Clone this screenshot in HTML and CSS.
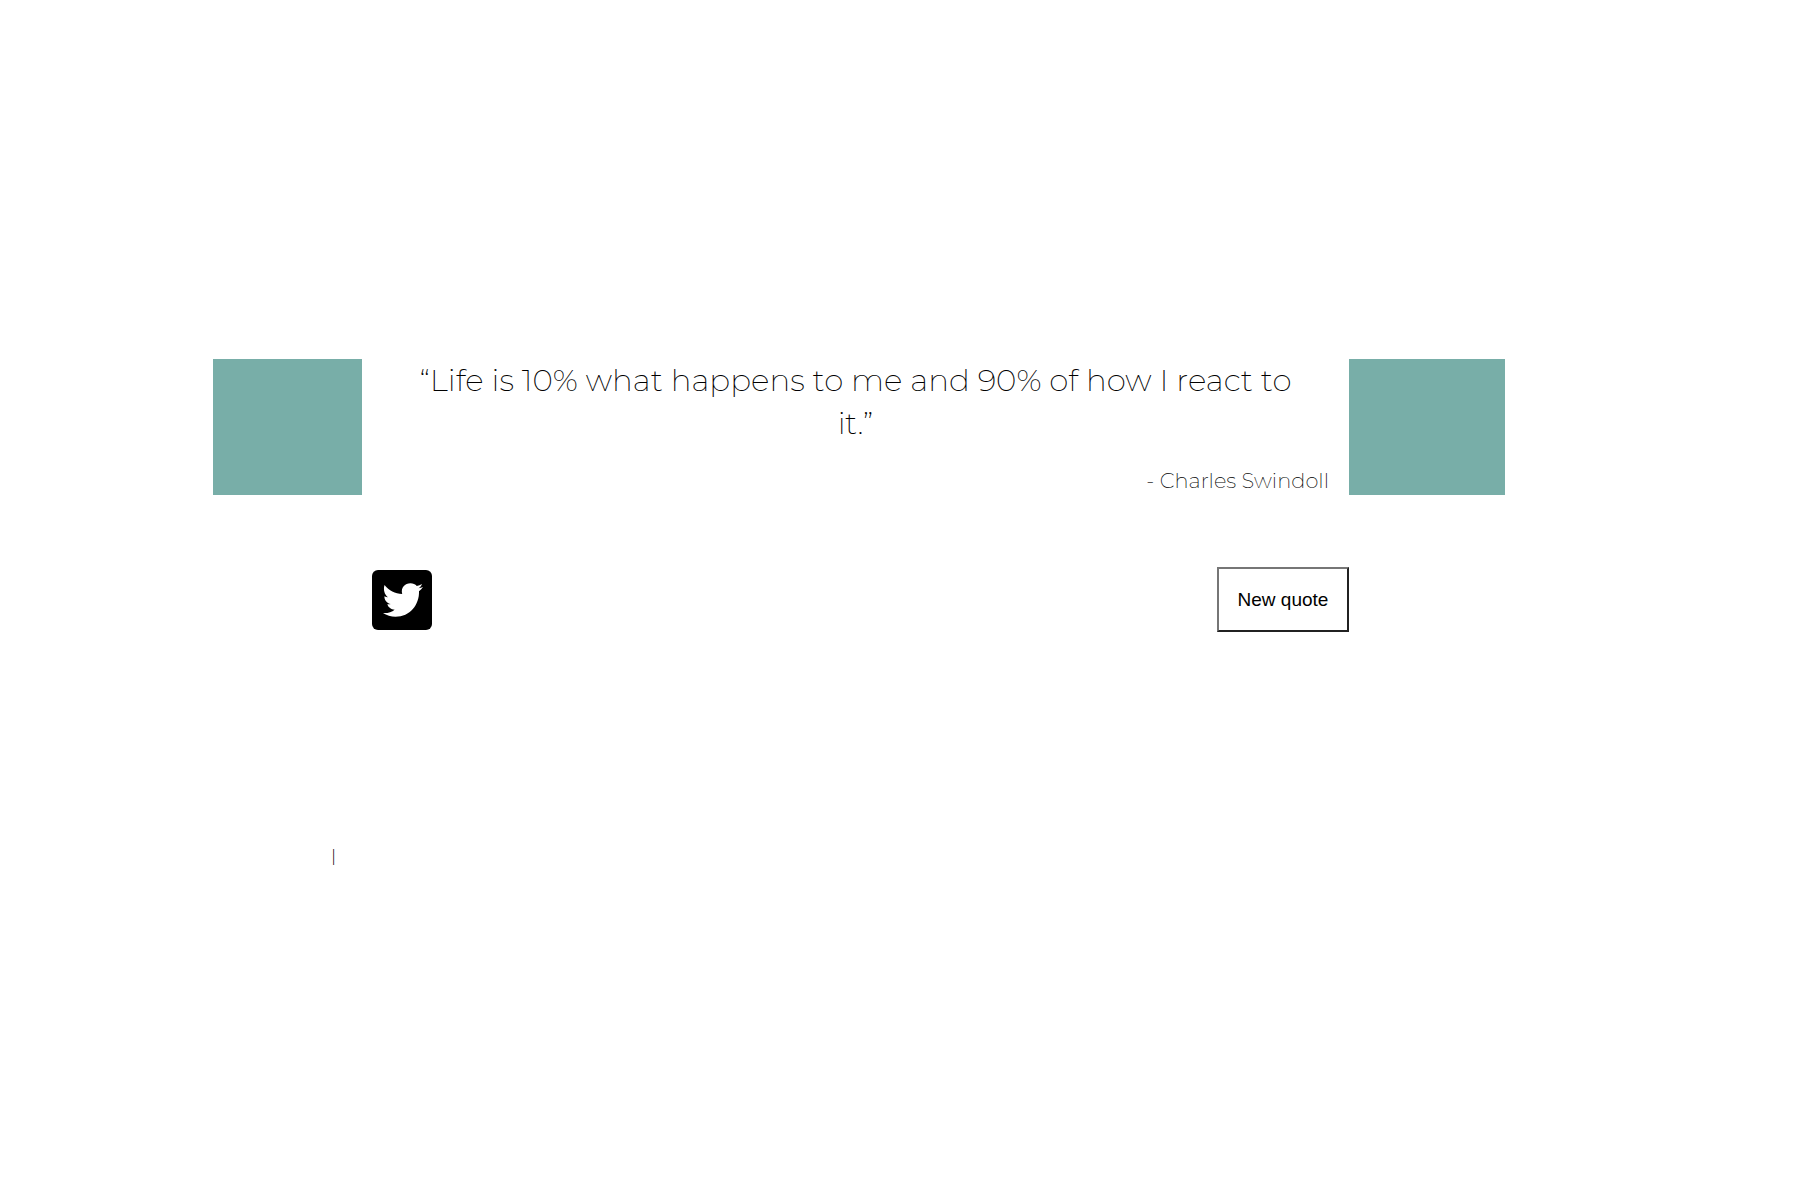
FILE: index.html
```html
<!DOCTYPE html>
<html lang="en">
<head>
  <meta charset="utf-8">
  <meta name="viewport" content="width=device-width, initial-scale=1">
  <title>Quote machine</title>
  <link rel="stylesheet" href="styles.css">
</head>
<body>
  <main class="quote-box">
    <div class="block block-left"></div>
    <section class="quote">
      <p class="quote-text">“Life is 10% what happens to me and 90% of how I react to it.”</p>
      <p class="quote-author">- Charles Swindoll</p>
    </section>
    <div class="block block-right"></div>
    <div class="actions">
      <a class="tweet" href="#" aria-label="Tweet this quote">
        <svg viewBox="0 0 60 60" aria-hidden="true">
          <rect width="60" height="60" rx="6"/>
          <path fill="#fff" d="M12.500 15C17 20.500 23 23.500 30.200 24C28.500 17.500 33 13.200 38.500 13.200C41 13.200 43.300 14.200 44.800 16C46.600 15.600 48.400 14.900 50 14C49.400 15.900 48.100 17.400 46.500 18.300C48.200 18.200 49.800 17.700 51 17.100C50 18.700 48.600 20.100 47 21.200C47.500 34.500 38 46.700 23.500 46.700C19 46.700 14.500 45.300 11 43C15.400 43.400 19.600 42.200 22.700 39.700C19.200 39.600 16.300 37.300 15.300 34.200C16.500 34.400 17.700 34.400 18.700 34.100C14.900 33.300 12.300 30 12.400 26.200C13.500 26.800 14.700 27.200 16 27.200C12.400 24.700 11.100 19.400 12.500 15Z"/>
        </svg>
      </a>
      <button class="new-quote" type="button">New quote</button>
    </div>
    <div class="divider">|</div>
  </main>
</body>
</html>
```
FILE: styles.css
```css
* {
  box-sizing: border-box;
}

body {
  margin: 0;
  background: #fff;
  color: #000;
  font-family: Montserrat, Inter, sans-serif;
  font-size: 16px;
  font-weight: 300;
}

.quote-box {
  display: grid;
  grid-template-columns: 213fr 149fr 987fr 156fr 311fr;
  padding-top: 359px;
}

.block {
  background: #78aea8;
}

.block-left {
  grid-column: 2;
}

.quote {
  grid-column: 3;
  padding: 0 20px 2px;
}

.quote-text {
  margin: 0 0 24px;
  padding: 0 20px;
  font-size: 31px;
  font-weight: 200;
  line-height: 43px;
  text-align: center;
}

.quote-author {
  margin: 0;
  font-size: 21px;
  font-weight: 200;
  line-height: 24px;
  text-align: right;
}

.actions {
  grid-column: 3;
  display: flex;
  align-items: center;
  justify-content: space-between;
  margin-top: 72px;
  padding-left: 10px;
}

.tweet {
  display: block;
  width: 60px;
  height: 60px;
}

.tweet svg {
  display: block;
}

.new-quote {
  width: 132px;
  height: 65px;
  padding: 0;
  border: 2px solid;
  border-color: #767676 #212121 #212121 #767676;
  background: #fff;
  color: #000;
  font-family: "Liberation Sans", Arial, sans-serif;
  font-size: 19px;
}

.divider {
  grid-column: 2;
  margin-top: 215px;
  padding-right: 26px;
  line-height: 20px;
  text-align: right;
}
```
